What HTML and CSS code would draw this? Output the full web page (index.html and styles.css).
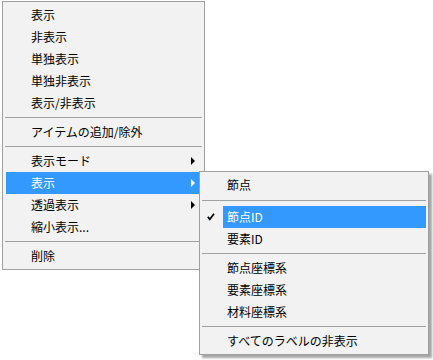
FILE: index.html
```html
<!DOCTYPE html>
<html lang="ja">
  <head>
    <meta charset="UTF-8" />
    <meta name="viewport" content="width=device-width, initial-scale=1.0" />
    <title>Context menu</title>
    <link rel="stylesheet" href="styles.css">
  </head>

  <body>
    <!-- Main context menu -->
    <div class="menu main-menu">
      <div class="menu-item">表示</div>
      <div class="menu-item">非表示</div>
      <div class="menu-item">単独表示</div>
      <div class="menu-item">単独非表示</div>
      <div class="menu-item">表示/非表示</div>
      <div class="menu-sep"></div>
      <div class="menu-item">アイテムの追加/除外</div>
      <div class="menu-sep"></div>
      <div class="menu-item">表示モード<span class="arrow"></span></div>
      <div class="menu-item active">表示<span class="arrow"></span></div>
      <div class="menu-item">透過表示<span class="arrow"></span></div>
      <div class="menu-item">縮小表示...</div>
      <div class="menu-sep"></div>
      <div class="menu-item">削除</div>
    </div>

    <!-- Submenu of 表示 -->
    <div class="menu sub-menu">
      <div class="sub-item"><span class="mark"></span><span class="label">節点</span></div>
      <div class="sub-sep first"></div>
      <div class="sub-item">
        <span class="mark">
          <svg width="8" height="8" viewBox="0 0 8 8">
            <path d="M0.8 3.8 L2.8 6.3 L7 0.8" fill="none" stroke="#000" stroke-width="1.7" />
          </svg>
        </span>
        <span class="label active">節点ID</span>
      </div>
      <div class="sub-item"><span class="mark"></span><span class="label">要素ID</span></div>
      <div class="sub-sep"></div>
      <div class="sub-item"><span class="mark"></span><span class="label">節点座標系</span></div>
      <div class="sub-item"><span class="mark"></span><span class="label">要素座標系</span></div>
      <div class="sub-item"><span class="mark"></span><span class="label">材料座標系</span></div>
      <div class="sub-sep"></div>
      <div class="sub-item"><span class="mark"></span><span class="label">すべてのラベルの非表示</span></div>
    </div>
  </body>
</html>
```

FILE: styles.css
```css
* {
  margin: 0;
  padding: 0;
  box-sizing: border-box;
}

body {
  font-family: "Noto Sans CJK JP", "Noto Sans", sans-serif;
  font-size: 12px;
  color: #000;
  background-color: #fff;
  width: 433px;
  height: 360px;
  position: relative;
  overflow: hidden;
}

.menu {
  position: absolute;
  background-color: #f2f2f2;
  border: 1px solid #a0a0a0;
}

/* main menu */
.main-menu {
  left: 2px;
  top: 1px;
  width: 203px;
  padding: 2px 4px 2px 3px;
}

.menu-item {
  display: flex;
  align-items: center;
  height: 22px;
  line-height: 22px;
  padding-left: 25px;
  white-space: nowrap;
}

.menu-item.active {
  background-color: #3399ff;
  color: #fff;
}

.arrow {
  margin-left: auto;
  margin-right: 5px;
  width: 0;
  height: 0;
  border-left: 4px solid #000;
  border-top: 4px solid transparent;
  border-bottom: 4px solid transparent;
}

.menu-item.active .arrow {
  border-left-color: #fff;
}

.menu-sep {
  height: 1px;
  background-color: #a0a0a0;
  margin: 3px -2px 3px -1px;
}

/* submenu */
.sub-menu {
  left: 199px;
  top: 171px;
  width: 230px;
  padding: 2px 0;
  box-shadow: 3px 3px 2px rgba(0, 0, 0, 0.35);
}

.sub-item {
  display: flex;
  height: 22px;
  line-height: 22px;
  margin-right: 2px;
  white-space: nowrap;
}

.sub-item .mark {
  width: 23px;
  display: flex;
  align-items: center;
  padding-left: 7px;
}

.sub-item .label {
  flex: 1;
  padding-left: 4px;
}

.sub-item .label.active {
  background-color: #3399ff;
  color: #fff;
}

.sub-sep {
  height: 1px;
  background-color: #a0a0a0;
  margin: 3px 2px;
}

.sub-sep.first {
  margin: 4px 2px 5px;
}
```
